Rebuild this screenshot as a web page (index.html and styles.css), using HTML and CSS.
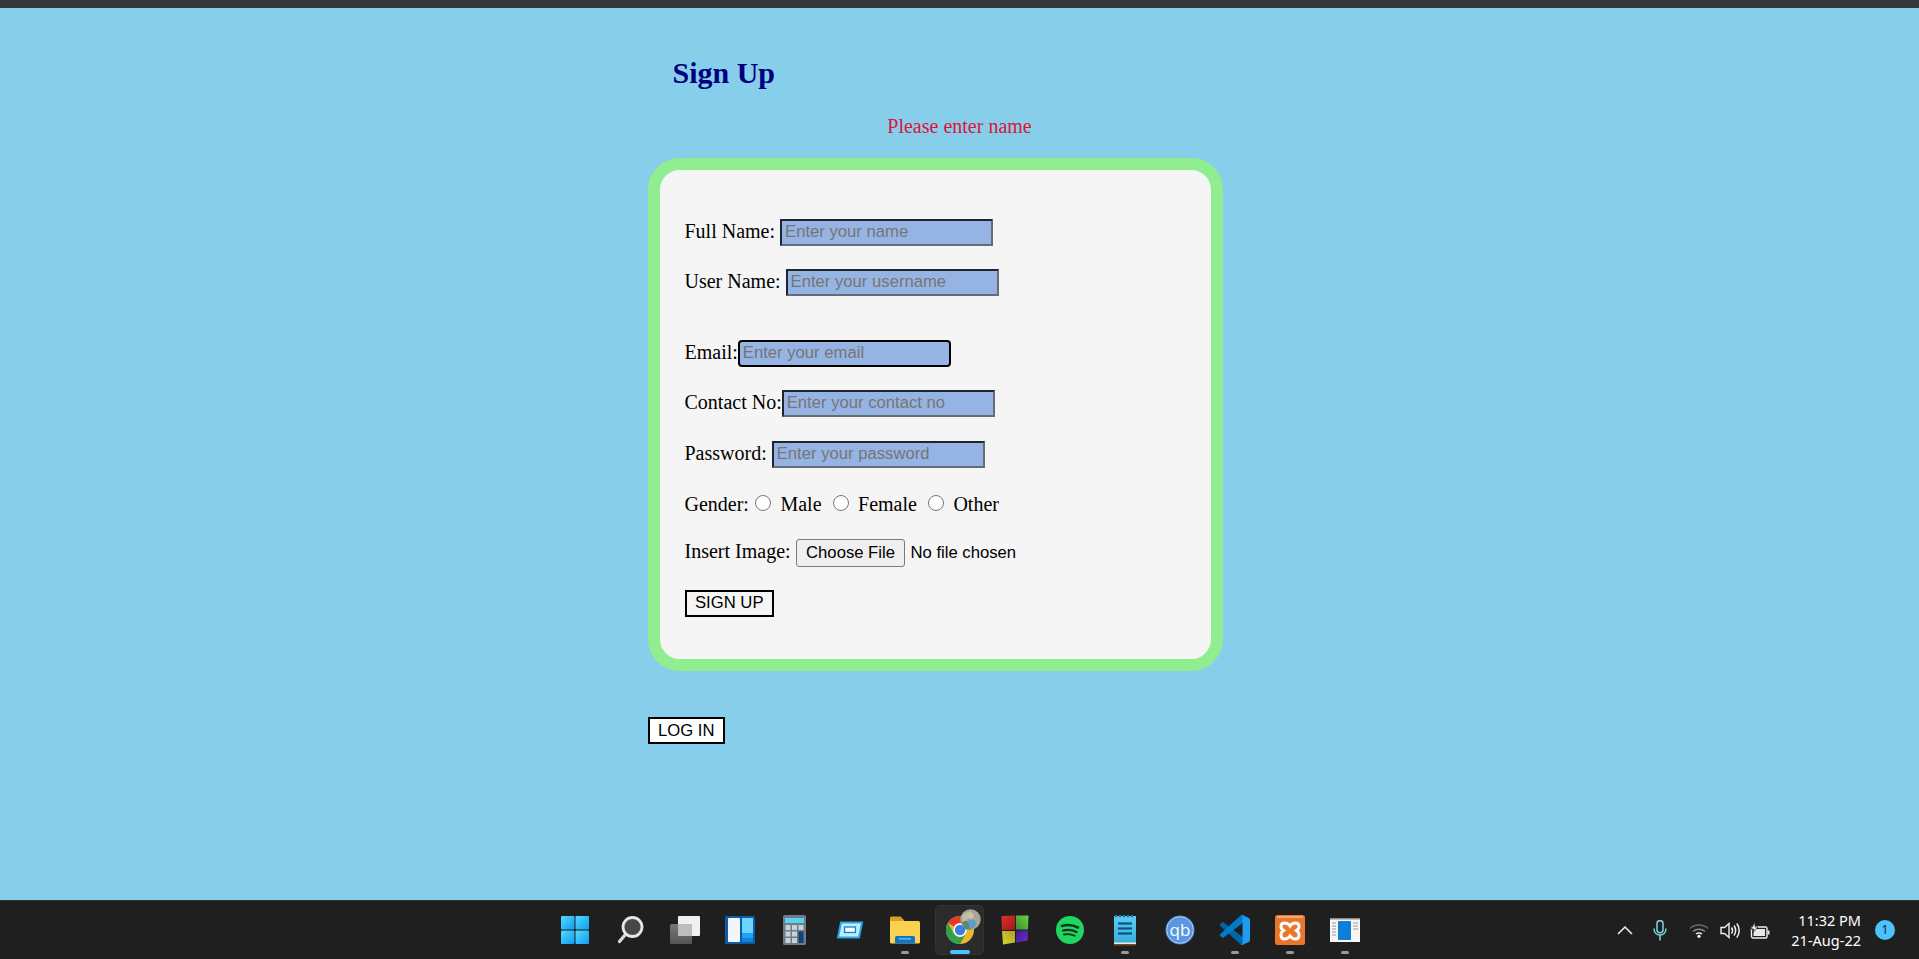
FILE: index.html
```html
<!DOCTYPE html>
<html lang="en">
<head>
    <meta charset="UTF-8">
    <meta name="viewport" content="width=device-width, initial-scale=1.0">
    <title>Sign Up</title>
    <link rel="stylesheet" href="styles.css">
</head>
<body>
    <div class="top-strip"></div>

    <main class="page">
        <div class="wrap">
            <h1>Sign Up</h1>
        </div>
        <p class="message">Please enter name</p>

        <div class="wrap">
            <form class="card">
                <div class="row">Full Name: <input type="text" placeholder="Enter your name"></div>
                <div class="row">User Name: <input type="text" placeholder="Enter your username"></div>
                <div class="row row-email">Email:<input type="email" class="focused" placeholder="Enter your email"></div>
                <div class="row">Contact No:<input type="text" placeholder="Enter your contact no"></div>
                <div class="row row-password">Password: <input type="password" placeholder="Enter your password"></div>
                <div class="row row-gender">Gender:<input type="radio" name="gender"> Male <input type="radio" name="gender"> Female <input type="radio" name="gender"> Other</div>
                <div class="row row-file">Insert Image: <input type="file"></div>
                <div class="row row-submit"><button type="button" class="btn">SIGN UP</button></div>
            </form>
            <button type="button" class="btn btn-login">LOG IN</button>
        </div>
    </main>

    <footer class="taskbar">
        <div></div>
        <div class="apps">
            <!-- start -->
            <div class="app">
                <svg width="30" height="30" viewBox="0 0 30 30">
                    <defs>
                        <linearGradient id="winBlue" x1="0" y1="0" x2="1" y2="1">
                            <stop offset="0" stop-color="#52dcfc"/>
                            <stop offset="1" stop-color="#0f9bf2"/>
                        </linearGradient>
                    </defs>
                    <rect x="1" y="1" width="13.500" height="13.500" rx="1" fill="url(#winBlue)"/>
                    <rect x="15.500" y="1" width="13.500" height="13.500" rx="1" fill="url(#winBlue)"/>
                    <rect x="1" y="15.500" width="13.500" height="13.500" rx="1" fill="url(#winBlue)"/>
                    <rect x="15.500" y="15.500" width="13.500" height="13.500" rx="1" fill="url(#winBlue)"/>
                </svg>
            </div>
            <!-- search -->
            <div class="app">
                <svg width="30" height="30" viewBox="0 0 30 30">
                    <path d="M10 20 4.500 26.500" stroke="#d8d8d8" stroke-width="3.400" stroke-linecap="round"/>
                    <circle cx="17.500" cy="12" r="9.500" fill="#474747" stroke="#e6e6e6" stroke-width="2.800"/>
                </svg>
            </div>
            <!-- task view -->
            <div class="app">
                <svg width="30" height="30" viewBox="0 0 30 30">
                    <defs>
                        <linearGradient id="taskBack" x1="0" y1="0" x2="0" y2="1">
                            <stop offset="0" stop-color="#777"/>
                            <stop offset="1" stop-color="#555"/>
                        </linearGradient>
                    </defs>
                    <rect x="0" y="9" width="22" height="20" rx="1.500" fill="url(#taskBack)"/>
                    <rect x="8" y="1" width="22" height="20" rx="1" fill="#f0f0f0"/>
                    <rect x="8" y="9" width="14" height="12" fill="#bdbdbd"/>
                </svg>
            </div>
            <!-- widgets -->
            <div class="app">
                <svg width="30" height="30" viewBox="0 0 30 30">
                    <rect x="0" y="1" width="30" height="28" rx="1.500" fill="#0b5cab"/>
                    <rect x="3" y="3" width="12" height="24" rx="1" fill="#f2f6fb"/>
                    <rect x="17" y="3" width="11" height="15" fill="#6fd4fb"/>
                    <rect x="17" y="18" width="11" height="5" fill="#1fa2f0"/>
                    <rect x="17" y="23" width="11" height="4" fill="#0f86dd"/>
                </svg>
            </div>
            <!-- calculator -->
            <div class="app">
                <svg width="24" height="30" viewBox="0 0 24 30">
                    <rect x="0" y="0" width="23" height="30" rx="1.500" fill="#6e7c88"/>
                    <rect x="2" y="3" width="19" height="5" fill="#5fd0f5"/>
                    <g fill="#c9d0d6">
                        <rect x="2.500" y="10" width="5" height="5"/><rect x="9" y="10" width="5" height="5"/><rect x="15.500" y="10" width="5" height="5"/>
                        <rect x="2.500" y="16.500" width="5" height="5"/><rect x="9" y="16.500" width="5" height="5"/>
                        <rect x="2.500" y="23" width="5" height="5"/><rect x="9" y="23" width="5" height="5"/>
                    </g>
                    <rect x="15.500" y="16.500" width="5" height="11.500" fill="#12427c"/>
                </svg>
            </div>
            <!-- snip tool -->
            <div class="app">
                <svg width="28" height="20" viewBox="0 0 28 20">
                    <path d="M5 2.500H26L23 17.500H2Z" fill="#bfeeff" stroke="#2aa6e8" stroke-width="2"/>
                    <rect x="8.500" y="7" width="11" height="5.500" fill="#f4fbff" stroke="#1b7fc9" stroke-width="1.300"/>
                </svg>
            </div>
            <!-- explorer -->
            <div class="app running">
                <svg width="30" height="30" viewBox="0 0 30 30">
                    <path d="M0 3a1.500 1.500 0 0 1 1.500-1.500h9L14 5v8H0Z" fill="#d9a21b"/>
                    <path d="M0 6h28.500a1.500 1.500 0 0 1 1.500 1.500V27a1.500 1.500 0 0 1-1.500 1.500H1.500A1.500 1.500 0 0 1 0 27Z" fill="#fbd24e"/>
                    <path d="M5 22.500a1.500 1.500 0 0 1 1.500-1.500h17a1.500 1.500 0 0 1 1.500 1.500v6H5Z" fill="#1475c4"/>
                    <rect x="9" y="23" width="12" height="1.500" fill="#5fbcf0"/>
                </svg>
            </div>
            <!-- chrome, active window -->
            <div class="app active">
                <svg class="chrome" width="30" height="30" viewBox="0 0 30 30">
                    <circle cx="15" cy="15" r="14" fill="#e8ba2b"/>
                    <path d="M15 1A14 14 0 0 1 27.100 8H15A7 7 0 0 0 8.900 11.500L3 8A14 14 0 0 1 15 1Z" fill="#e2392d"/>
                    <path d="M3 8 8.900 18.500A7 7 0 0 0 15 22L9 28A14 14 0 0 1 3 8Z" fill="#2fa04c"/>
                    <path d="M9 27.700 15 22A7 7 0 0 0 21 18.500L15 29Z" fill="#2fa04c"/>
                    <circle cx="15" cy="15" r="6.700" fill="#fff"/>
                    <circle cx="15" cy="15" r="5.200" fill="#3b7fe6"/>
                </svg>
                <svg class="avatar" width="21" height="21" viewBox="0 0 21 21">
                    <circle cx="10.500" cy="10.500" r="10.200" fill="#a9a59c"/>
                    <path d="M2 7C5 3 9 2 12 3L9 9 3 13Z" fill="#b9c09a"/>
                    <path d="M1.500 14C5 11 8 11.500 9.500 14L11 20.500H5Z" fill="#5b8a7a"/>
                    <circle cx="11" cy="7" r="2.800" fill="#d8c0a8"/>
                    <path d="M8.500 11H15L16.500 16 12 20H9.500Z" fill="#5f9fc5"/>
                </svg>
            </div>
            <!-- colour tiles -->
            <div class="app">
                <svg width="28" height="30" viewBox="0 0 28 30">
                    <defs>
                        <linearGradient id="tileRed" x1="0" y1="0" x2="1" y2="1"><stop offset="0" stop-color="#d8352c"/><stop offset="1" stop-color="#a81512"/></linearGradient>
                        <linearGradient id="tileGreen" x1="1" y1="0" x2="0" y2="1"><stop offset="0" stop-color="#6fd046"/><stop offset="1" stop-color="#35902a"/></linearGradient>
                        <linearGradient id="tileYellow" x1="0" y1="1" x2="1" y2="0"><stop offset="0" stop-color="#d8d23a"/><stop offset="1" stop-color="#a8a41e"/></linearGradient>
                        <linearGradient id="tilePurple" x1="1" y1="1" x2="0" y2="0"><stop offset="0" stop-color="#6f30d0"/><stop offset="1" stop-color="#3f1590"/></linearGradient>
                    </defs>
                    <path d="M0.500 1 14 0.500V14.700L1 15Z" fill="url(#tileRed)"/>
                    <path d="M15 0.500 27.500 0.500 27 14.500H15Z" fill="url(#tileGreen)"/>
                    <path d="M1 16H14V27.500L2 29.500Z" fill="url(#tileYellow)"/>
                    <path d="M15 15.500H27L26.500 25.500 15 27.500Z" fill="url(#tilePurple)"/>
                </svg>
            </div>
            <!-- spotify -->
            <div class="app">
                <svg width="30" height="30" viewBox="0 0 30 30">
                    <circle cx="15" cy="15" r="14" fill="#1ed760"/>
                    <g fill="none" stroke="#14331f" stroke-linecap="round">
                        <path d="M7 11C12 9.500 18 10 23 12.500" stroke-width="2.600"/>
                        <path d="M8 15.500C12.500 14.300 17.500 14.800 21.500 17" stroke-width="2.200"/>
                        <path d="M9 19.500C12.500 18.700 16.500 19 19.800 20.800" stroke-width="1.800"/>
                    </g>
                </svg>
            </div>
            <!-- notepad -->
            <div class="app running">
                <svg width="24" height="32" viewBox="0 0 24 32">
                    <defs>
                        <linearGradient id="notePage" x1="0" y1="0" x2="0" y2="1">
                            <stop offset="0" stop-color="#5ccdf0"/>
                            <stop offset="1" stop-color="#3aaedc"/>
                        </linearGradient>
                    </defs>
                    <rect x="1" y="2" width="22" height="27" fill="url(#notePage)"/>
                    <rect x="1" y="28.500" width="22" height="1.500" fill="#e8e8e8"/>
                    <rect x="1" y="30" width="22" height="1.500" fill="#7a4a24"/>
                    <path d="M2 2H22" stroke="#1a6ea8" stroke-width="2.500" stroke-dasharray="2 2"/>
                    <g stroke="#0d4f86" stroke-width="2.200">
                        <path d="M5 9.500H19"/><path d="M5 14.500H19"/><path d="M5 19.500H19"/>
                    </g>
                </svg>
            </div>
            <!-- qbittorrent -->
            <div class="app">
                <svg width="30" height="30" viewBox="0 0 30 30">
                    <circle cx="15" cy="15" r="14.500" fill="#3f7fd0"/>
                    <circle cx="15" cy="15" r="13.300" fill="#5a97e0" stroke="#c9def5" stroke-width="0.800"/>
                    <text x="15" y="20.500" text-anchor="middle" class="qb-text">qb</text>
                </svg>
            </div>
            <!-- vs code -->
            <div class="app running">
                <svg width="30" height="30" viewBox="0 0 100 100">
                    <path d="M96.460 89.200 75.860 99.130a6.230 6.230 0 0 1-7.100-1.200L1.300 36.400a4.170 4.170 0 0 1 0-6.160l5.500-5a4.170 4.170 0 0 1 5.320-.24l81.200 61.600c2.700 2.070 6.600.14 6.600-3.270v.24a6.250 6.250 0 0 1-3.540 5.630Z" fill="#0065a9"/>
                    <path d="M96.460 10.800 75.860.87a6.230 6.230 0 0 0-7.100 1.200L1.300 63.600a4.170 4.170 0 0 0 0 6.160l5.500 5a4.170 4.170 0 0 0 5.320.24l81.200-61.600c2.700-2.070 6.600-.14 6.600 3.270v-.24a6.250 6.250 0 0 0-3.540-5.630Z" fill="#007acc"/>
                    <path d="M75.860 99.130a6.220 6.220 0 0 1-7.100-1.200c2.300 2.300 6.240.67 6.240-2.600V4.670c0-3.270-3.940-4.900-6.240-2.600a6.220 6.220 0 0 1 7.100-1.200l20.600 9.900A6.250 6.250 0 0 1 100 16.400v67.200c0 2.400-1.380 4.600-3.540 5.630Z" fill="#1f9cf0"/>
                </svg>
            </div>
            <!-- xampp -->
            <div class="app running">
                <svg width="30" height="30" viewBox="0 0 30 30">
                    <rect x="0" y="0" width="30" height="30" rx="2.500" fill="#e8762b"/>
                    <rect x="2" y="1" width="26" height="2" fill="#f6a76e"/>
                    <path d="M9.500 8C5.500 8 4.500 13 8.500 15.500 4.500 18 5.500 24 9.500 24 12 24 14 22.500 15 21 16 22.500 18 24 20.500 24 24.500 24 25.500 18 21.500 15.500 25.500 13 24.500 8 20.500 8 18 8 16 9.500 15 11 14 9.500 12 8 9.500 8Z" fill="#e8762b" stroke="#fff" stroke-width="3"/>
                </svg>
            </div>
            <!-- window app -->
            <div class="app running">
                <svg width="30" height="24" viewBox="0 0 30 24">
                    <rect x="0" y="0" width="30" height="24" fill="#f6f6f6"/>
                    <rect x="0" y="0" width="30" height="1.500" fill="#8a8a8a"/>
                    <rect x="8" y="3" width="13" height="19" rx="1" fill="#0d7fd6"/>
                    <g stroke="#9a9a9a" stroke-width="1">
                        <path d="M2 5H6"/><path d="M2 8H6"/><path d="M2 11H6"/><path d="M2 14H6"/><path d="M2 17H6"/>
                        <path d="M23 5H28"/><path d="M23 8H28"/><path d="M23 11H28"/>
                    </g>
                </svg>
            </div>
        </div>
        <div class="tray">
            <svg class="tray-chevron" width="16" height="10" viewBox="0 0 16 10">
                <path d="M1 9 8 2 15 9" fill="none" stroke="#f0f0f0" stroke-width="1.500"/>
            </svg>
            <svg class="tray-mic" width="14" height="21" viewBox="0 0 14 21">
                <rect x="4" y="0.700" width="6" height="12" rx="3" fill="none" stroke="#7fd3e0" stroke-width="1.500"/>
                <path d="M1 8.500C1 12.500 3.500 15 7 15S13 12.500 13 8.500M7 15V20.500" fill="none" stroke="#7fd3e0" stroke-width="1.500"/>
            </svg>
            <svg class="tray-wifi" width="20" height="15" viewBox="0 0 20 15">
                <path d="M1 5.500C6 .8 14 .8 19 5.500" fill="none" stroke="#6a6a6a" stroke-width="1.500"/>
                <path d="M4 8.500C7.500 5.500 12.500 5.500 16 8.500" fill="none" stroke="#8a8a8a" stroke-width="1.500"/>
                <path d="M7 11C8.800 9.700 11.200 9.700 13 11" fill="none" stroke="#e8e8e8" stroke-width="1.500"/>
                <circle cx="10" cy="13.300" r="1.600" fill="#fff"/>
            </svg>
            <svg class="tray-speaker" width="21" height="17" viewBox="0 0 21 17">
                <path d="M1 5.500H4.500L9 1.500V15.500L4.500 11.500H1Z" fill="none" stroke="#f0f0f0" stroke-width="1.400"/>
                <path d="M11.500 5.500C12.800 7.300 12.800 9.700 11.500 11.500M14 3.500C16.200 6.300 16.200 10.700 14 13.500M16.800 1.500C20 5.500 20 11.500 16.800 15.500" fill="none" stroke="#f0f0f0" stroke-width="1.500"/>
            </svg>
            <svg class="tray-battery" width="20" height="17" viewBox="0 0 20 17">
                <rect x="1.500" y="5" width="15.500" height="11" rx="1.500" fill="none" stroke="#f0f0f0" stroke-width="1.400"/>
                <rect x="3.500" y="7" width="11.500" height="7" fill="#e8e8e8"/>
                <rect x="17.500" y="8.500" width="2" height="4" fill="#e8e8e8"/>
                <path d="M5 0 1 7H4L2.500 11 8 5H5Z" fill="#fff" stroke="#1f1f1f" stroke-width="0.800"/>
            </svg>
            <div class="clock">
                <span>11:32 PM</span>
                <span>21-Aug-22</span>
            </div>
            <div class="badge">1</div>
        </div>
    </footer>
</body>
</html>
```

FILE: styles.css
```css
html, body {
    height: 100%;
}
body {
    margin: 0;
    display: flex;
    flex-direction: column;
    overflow: hidden;
    background-color: skyblue;
    font-family: "Liberation Serif", serif;
    font-size: 20px;
}
.top-strip {
    height: 8px;
    background-color: #35363a;
}
.page {
    flex: 1;
}
.wrap {
    width: 624px;
    margin: 0 auto;
}
h1 {
    margin: 0;
    padding: 47px 0 0 25px;
    font-size: 30px;
    line-height: 36px;
    color: navy;
}
.message {
    margin: 0;
    padding-top: 24px;
    line-height: 23px;
    text-align: center;
    color: crimson;
}
.card {
    box-sizing: border-box;
    width: 575px;
    height: 513px;
    margin-top: 20px;
    padding: 47px 25px 0;
    background-color: whitesmoke;
    border: 12px solid lightgreen;
    border-radius: 32px;
}
.row {
    height: 28px;
    line-height: 28px;
    margin-bottom: 22px;
    white-space: nowrap;
}
.row-email {
    margin-top: 43px;
}
.row-password {
    margin-top: 23px;
}
.row-gender {
    margin-top: 23px;
    margin-bottom: 19px;
}
input[type="text"], input[type="email"], input[type="password"] {
    box-sizing: border-box;
    width: 213px;
    height: 27px;
    padding: 1px 3px;
    vertical-align: 1px;
    background-color: #95b4e3;
    border: 2px solid;
    border-color: #1d2530 #666c74 #666c74 #1d2530;
    font-family: "Liberation Sans", sans-serif;
    font-size: 16.670px;
}
input.focused {
    border-color: #000;
    border-radius: 4px;
}
input[type="radio"] {
    width: 16px;
    height: 16px;
    margin: 4px 4.500px 1px 6px;
}
input[type="file"] {
    font-family: "Liberation Sans", sans-serif;
    font-size: 16.670px;
}
input[type="file"]::file-selector-button {
    height: 28px;
    padding: 0 9.500px;
    margin-right: 5px;
    background-color: #efefef;
    border: 1px solid #7a7a7a;
    border-radius: 3px;
}
.btn {
    height: 27px;
    padding: 0 8.500px;
    background-color: transparent;
    border: 2px solid #000;
    font-family: "Liberation Sans", sans-serif;
    font-size: 16.670px;
    color: #000;
}
.btn-login {
    display: block;
    margin-top: 46px;
    background-color: #fff;
}

.taskbar {
    display: grid;
    grid-template-columns: 1fr auto 1fr;
    height: 59px;
    background-color: #1f1f1f;
    border-top: 1px solid #2e2e2e;
    box-sizing: border-box;
}
.apps {
    display: flex;
}
.app {
    position: relative;
    width: 55px;
    height: 58px;
    display: flex;
    align-items: center;
    justify-content: center;
}
.app.running::after {
    content: "";
    position: absolute;
    left: 24px;
    bottom: 5px;
    width: 8px;
    height: 3px;
    border-radius: 2px;
    background-color: #9a9a9a;
}
.app.active::before {
    content: "";
    position: absolute;
    left: 3px;
    top: 4px;
    width: 49px;
    height: 50px;
    box-sizing: border-box;
    border-radius: 5px;
    background-color: #2b2b2b;
    border: 1px solid #333;
}
.app.active::after {
    content: "";
    position: absolute;
    left: 18px;
    bottom: 5px;
    width: 20px;
    height: 4px;
    border-radius: 2px;
    background-color: #4cc2ff;
}
.chrome {
    position: relative;
}
.avatar {
    position: absolute;
    top: 8px;
    right: 6px;
}
.qb-text {
    font-family: "Open Sans", sans-serif;
    font-size: 17px;
    fill: #fff;
}
.tray {
    display: flex;
    align-items: center;
    justify-content: flex-end;
    color: #fff;
}
.tray-chevron {
    margin-right: 20px;
}
.tray-mic {
    margin-right: 22px;
}
.tray-wifi {
    margin-right: 11px;
}
.tray-speaker {
    margin-right: 9px;
}
.tray-battery {
    margin-right: 21px;
}
.clock {
    display: flex;
    flex-direction: column;
    align-items: flex-end;
    font-family: "Noto Sans", sans-serif;
    font-size: 14.500px;
    line-height: 20px;
    margin-right: 14px;
}
.badge {
    width: 20px;
    height: 20px;
    margin-right: 24px;
    border-radius: 50%;
    background-color: #4cc2ff;
    color: #123;
    font-family: "Noto Sans", sans-serif;
    font-size: 12px;
    line-height: 20px;
    text-align: center;
}
```
